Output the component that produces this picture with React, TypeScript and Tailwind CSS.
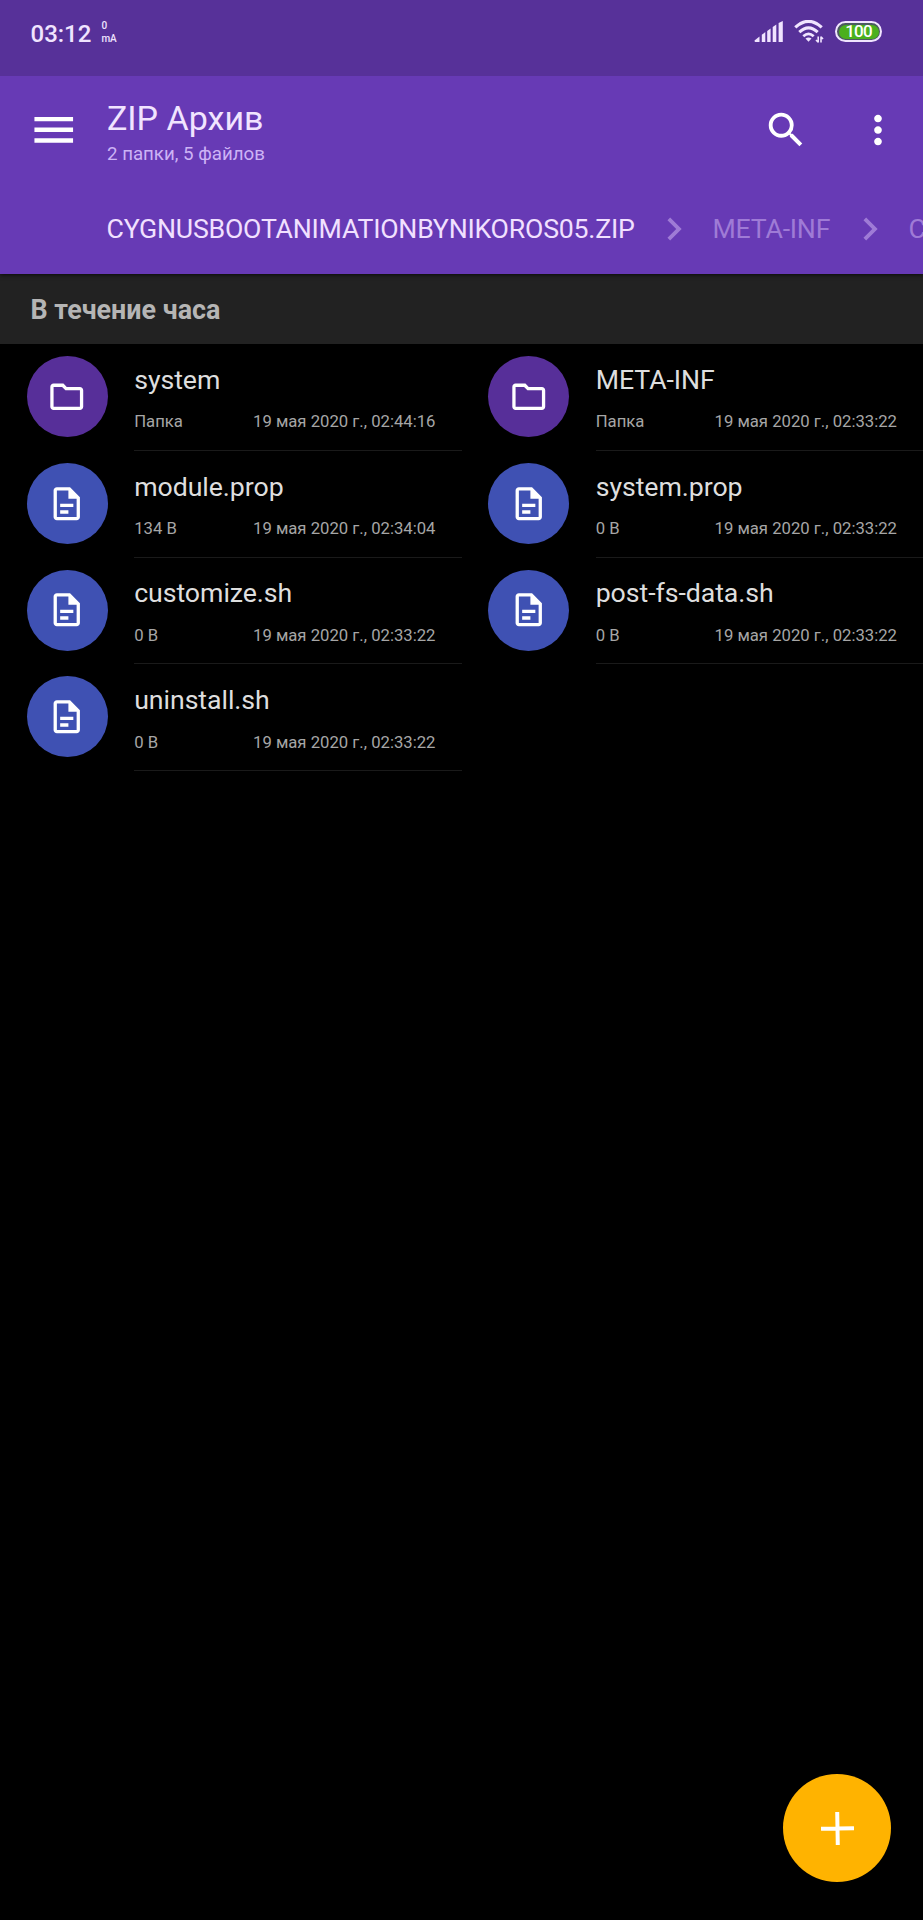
import clsx from "clsx";

type Entry = {
  name: string;
  size: string;
  date: string;
  folder?: boolean;
};

const entries: Entry[] = [
  { name: "system", size: "Папка", date: "19 мая 2020 г., 02:44:16", folder: true },
  { name: "META-INF", size: "Папка", date: "19 мая 2020 г., 02:33:22", folder: true },
  { name: "module.prop", size: "134 B", date: "19 мая 2020 г., 02:34:04" },
  { name: "system.prop", size: "0 B", date: "19 мая 2020 г., 02:33:22" },
  { name: "customize.sh", size: "0 B", date: "19 мая 2020 г., 02:33:22" },
  { name: "post-fs-data.sh", size: "0 B", date: "19 мая 2020 г., 02:33:22" },
  { name: "uninstall.sh", size: "0 B", date: "19 мая 2020 г., 02:33:22" },
];

type IconProps = {
  d: string;
  className?: string;
};

function Icon({ d, className = "" }: IconProps) {
  return (
    <svg className={clsx("block shrink-0", className)} viewBox="0 0 24 24" fill="currentColor">
      <path d={d} />
    </svg>
  );
}

const icons = {
  menu: "M3 18h18v-2H3v2zm0-5h18v-2H3v2zm0-7v2h18V6H3z",
  search:
    "M15.5 14h-.79l-.28-.27A6.471 6.471 0 0 0 16 9.5 6.5 6.5 0 1 0 9.5 16c1.61 0 3.09-.59 4.23-1.57l.27.28v.79l5 4.99L20.49 19l-4.99-5zm-6 0C7.01 14 5 11.99 5 9.5S7.01 5 9.5 5 14 7.01 14 9.5 11.99 14 9.5 14z",
  more: "M12 8c1.1 0 2-.9 2-2s-.9-2-2-2-2 .9-2 2 .9 2 2 2zm0 2c-1.1 0-2 .9-2 2s.9 2 2 2 2-.9 2-2-.9-2-2-2zm0 6c-1.1 0-2 .9-2 2s.9 2 2 2 2-.9 2-2-.9-2-2-2z",
  chevron: "M8.59 16.59L13.17 12 8.59 7.41 10 6l6 6-6 6-1.41-1.41z",
  folder:
    "M9.17 6l2 2H20v10H4V6h5.17M10 4H4c-1.1 0-1.99.9-1.99 2L2 18c0 1.1.9 2 2 2h16c1.1 0 2-.9 2-2V8c0-1.1-.9-2-2-2h-8l-2-2z",
  file: "M6 2c-1.1 0-2 .9-2 2v16c0 1.1.9 2 2 2h12c1.1 0 2-.9 2-2V8l-6-6H6zm0 2h7v5h5v11H6V4zm2 8v2h8v-2H8zm0 4v2h5v-2H8z",
};

function StatusBar() {
  return (
    <div className="relative z-20 flex h-[76px] items-start justify-between bg-[#573199] pl-[30.5px] pr-[41px] pt-[19px] text-[#f0e4ff]">
      <div className="flex gap-[10px]">
        <span className="pt-px text-[24px] font-medium leading-[29px]">03:12</span>
        <div className="flex flex-col text-[10px] font-medium leading-[13px]">
          <span>0</span>
          <span>mA</span>
        </div>
      </div>
      <div className="flex items-center gap-[11px] pt-px">
        <svg className="block h-[21px] w-[29px]" viewBox="0 0 29 21" fill="currentColor">
          <path d="M.5 19.5L5.5 15.5V21H1.5Q.5 21 .5 19.5zM7.8 13.8L11.3 11V21H7.8zM13.2 10L16.6 7.4V21h-3.4zM18.7 6L22.3 3.6V21h-3.6zM24.6 2L28.8 0V21h-4.2z" />
        </svg>
        <svg className="block h-[23px] w-[30px]" viewBox="0 0 30 23" fill="none" stroke="currentColor">
          <path d="M1.3 7.4Q14.5-4.6 27.7 7.4" strokeWidth="3.2" />
          <path d="M5.3 12.2Q14.5 3.6 23.7 12.2" strokeWidth="3" />
          <path d="M9.3 16.2Q14.5 11.6 19.7 16.2" strokeWidth="2.8" />
          <path d="M11.5 18.6Q14.5 16.4 17.5 18.6L14.5 21.8z" fill="currentColor" stroke="none" />
          <path d="M24.2 16.4v6M22 20l2.2 2.2M27 22.6v-6M29 19l-2-2.2" strokeWidth="1.6" />
        </svg>
        <div className="flex h-[21px] w-[47px] items-center justify-center rounded-full border-2 border-current bg-[#4c5a62] p-[1.5px]">
          <div className="flex h-full w-full items-center justify-center rounded-full bg-[#4bb01d] text-[17px] font-medium leading-none tracking-[-0.8px] text-white">
            100
          </div>
        </div>
      </div>
    </div>
  );
}

function Header() {
  return (
    <header className="relative z-10 flex h-[198px] flex-col bg-[#673ab5] text-[#f1e4ff] shadow-[0_1px_4px_rgba(0,0,0,0.7)]">
      <div className="flex h-[108px] items-center pl-[27.5px] pr-[22.5px]">
        <Icon d={icons.menu} className="mb-px size-[51.5px] text-white" />
        <div className="flex grow flex-col pl-[28px] pt-[3px]">
          <h1 className="text-[34px] leading-[40px]">ZIP Архив</h1>
          <p className="pt-[4px] text-[18.7px] leading-[24px] text-[#cdb3f5]">2 папки, 5 файлов</p>
        </div>
        <Icon d={icons.search} className="mr-[46px] size-[46px] text-white" />
        <Icon d={icons.more} className="size-[46px] text-white" />
      </div>
      <nav className="flex h-[90px] items-center overflow-hidden whitespace-nowrap pl-[106.5px] pt-px text-[26.7px] tracking-[-0.22px] text-[#9f7bd6]">
        <span className="w-[528px] shrink-0 text-[#f1e0ff]">CYGNUSBOOTANIMATIONBYNIKOROS05.ZIP</span>
        <Icon d={icons.chevron} className="mx-[16px] mb-[2px] size-[46px]" />
        <span className="w-[118px] shrink-0">META-INF</span>
        <Icon d={icons.chevron} className="mx-[16px] mb-[2px] size-[46px]" />
        <span>COM</span>
      </nav>
    </header>
  );
}

function FileRow({ name, size, date, folder }: Entry) {
  return (
    <li className="flex h-[106.75px] pl-[26.6px]">
      <div
        className={clsx(
          "mt-[12.2px] flex size-[81px] shrink-0 items-center justify-center rounded-full text-white",
          folder ? "bg-[#572f99]" : "bg-[#3f51b3]"
        )}
      >
        <Icon d={folder ? icons.folder : icons.file} className="size-[39.5px]" />
      </div>
      <div className="ml-[26.6px] flex grow flex-col border-b border-[#1a1a1a] pr-[26px] pt-[19.8px]">
        <span className="text-[26.7px] leading-[32px] tracking-[-0.06px] text-[#dedede]">{name}</span>
        <div className="flex justify-between pt-[15.6px] text-[16.7px] leading-[22px] text-[#a6a6a6]">
          <span>{size}</span>
          <span>{date}</span>
        </div>
      </div>
    </li>
  );
}

export default function App() {
  return (
    <div className="relative h-[1920px] w-[923px] overflow-hidden bg-black font-[Roboto,sans-serif]">
      <StatusBar />
      <Header />
      <h2 className="flex h-[70px] items-center bg-[#222222] pl-[30.5px] pt-[2px] text-[26.9px] font-bold text-[#b5b5b5]">
        В течение часа
      </h2>
      <ul className="grid grid-cols-2">
        {entries.map((entry) => (
          <FileRow key={entry.name} {...entry} />
        ))}
      </ul>
      <button className="absolute bottom-[38px] right-[32px] flex size-[108px] items-center justify-center rounded-full bg-[#ffb300]">
        <svg className="block size-[33px] -rotate-1" viewBox="0 0 33 33" stroke="white" strokeWidth="4">
          <path d="M16.5 0v33M0 16.5h33" />
        </svg>
      </button>
    </div>
  );
}
